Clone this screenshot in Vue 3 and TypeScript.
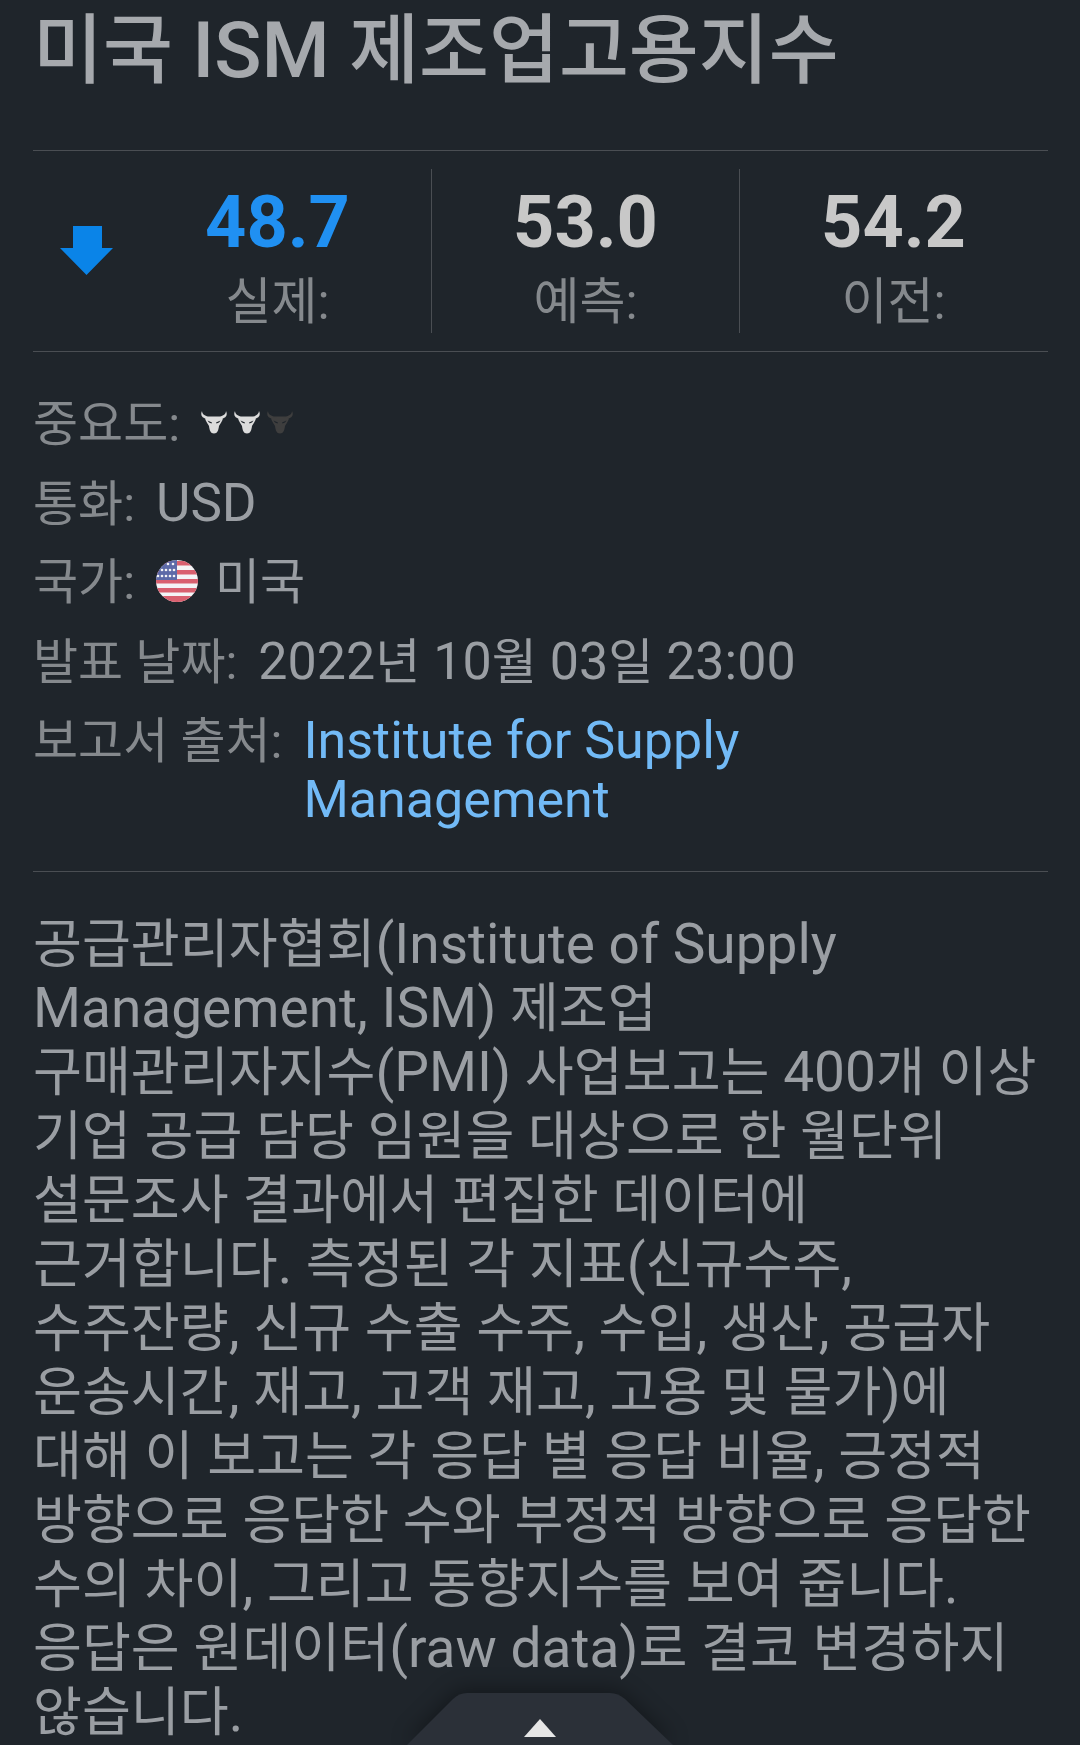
<template>
  <div class="page">
    <h1 class="title">
      <span v-for="(p, i) in split('미국 ISM 제조업고용지수')" :key="i" :class="{ lat: p.latin }">{{ p.text }}</span>
    </h1>
    <div class="stats">
      <div class="arrow-cell">
        <svg width="53" height="49" viewBox="0 0 53 49">
          <path d="M13 0H42V22H53L26.500 49L0 22H13Z" fill="#0a84e8" />
        </svg>
      </div>
      <div v-for="s in stats" :key="s.label" class="stat">
        <div class="stat-value" :class="{ actual: s.actual }">{{ s.value }}</div>
        <div class="stat-label">{{ s.label }}</div>
      </div>
    </div>
    <div class="info">
      <div class="row">
        <span class="key">중요도:</span>
        <span class="bulls">
          <svg v-for="b in 3" :key="b" width="26" height="23" viewBox="0 0 26 23" :class="{ dim: b === 3 }">
            <path d="M1 0C-1 4 1 7 6 8H20C25 7 27 4 25 0C25 3 22 5 19 5.500H7C4 5 1 3 1 0Z" />
            <path d="M4 7.500C7 5.500 19 5.500 22 7.500C21 11 19 13 18 15C17.500 19 16.500 22.500 13 22.500C9.500 22.500 8.500 19 8 15C7 13 5 11 4 7.500Z" />
            <path class="eye" d="M6.500 9.500L11 11.500L10.500 12.500L8 11.500ZM19.500 9.500L15 11.500L15.500 12.500L18 11.500Z" />
          </svg>
        </span>
      </div>
      <div class="row">
        <span class="key">통화:</span>
        <span class="val lat">USD</span>
      </div>
      <div class="row">
        <span class="key">국가:</span>
        <svg class="flag" width="42" height="42" viewBox="0 0 42 42">
          <defs>
            <clipPath id="flag-clip"><circle cx="21" cy="21" r="21" /></clipPath>
          </defs>
          <g clip-path="url(#flag-clip)">
            <rect width="42" height="42" fill="#f4f4f6" />
            <rect v-for="y in flagStripes" :key="y" :y="y" width="42" height="4.500" fill="#d9606f" />
            <rect y="36" width="42" height="6" fill="#d9606f" />
            <rect width="21" height="20" fill="#5d6aa8" />
            <circle v-for="(d, i) in flagStars" :key="i" :cx="d[0]" :cy="d[1]" r="1.300" fill="#f4f4f6" />
          </g>
        </svg>
        <span class="val">미국</span>
      </div>
      <div class="row">
        <span class="key">발표 날짜:</span>
        <span class="val">
          <span v-for="(p, i) in split('2022년 10월 03일 23:00')" :key="i" :class="{ lat: p.latin }">{{ p.text }}</span>
        </span>
      </div>
      <div class="row source">
        <span class="key">보고서 출처:</span>
        <span class="link lat">Institute for Supply Management</span>
      </div>
    </div>
    <div class="desc">
      <div v-for="(line, n) in descLines" :key="n" class="desc-line">
        <span v-for="(p, i) in split(line)" :key="i" :class="{ lat: p.latin }">{{ p.text }}</span>
      </div>
    </div>
    <div class="tab">
      <svg class="tab-shape" width="266" height="52" viewBox="0 0 266 52">
        <path d="M0 52L46 6Q52 0 60 0H203Q211 0 218 6L266 52Z" fill="#2b3038" />
      </svg>
      <svg class="tab-arrow" width="32" height="18" viewBox="0 0 32 18"><path d="M16 0L32 18H0Z" fill="#e6e6e6" /></svg>
    </div>
  </div>
</template>

<script setup lang="ts">
const stats = [
  { value: '48.7', label: '실제:', actual: true },
  { value: '53.0', label: '예측:', actual: false },
  { value: '54.2', label: '이전:', actual: false },
]

const descLines = [
  '공급관리자협회(Institute of Supply',
  'Management, ISM) 제조업',
  '구매관리자지수(PMI) 사업보고는 400개 이상',
  '기업 공급 담당 임원을 대상으로 한 월단위',
  '설문조사 결과에서 편집한 데이터에',
  '근거합니다. 측정된 각 지표(신규수주,',
  '수주잔량, 신규 수출 수주, 수입, 생산, 공급자',
  '운송시간, 재고, 고객 재고, 고용 및 물가)에',
  '대해 이 보고는 각 응답 별 응답 비율, 긍정적',
  '방향으로 응답한 수와 부정적 방향으로 응답한',
  '수의 차이, 그리고 동향지수를 보여 줍니다.',
  '응답은 원데이터(raw data)로 결코 변경하지',
  '않습니다.',
]

const flagStripes = [1, 10, 19, 28]

const flagStars: number[][] = [
  [12, 4], [17, 4],
  [6, 10], [10, 10], [14, 10], [18, 10],
  [2, 16], [6, 16], [10, 16], [14, 16], [18, 16],
]

// Hangul and Latin runs take different sizes in the original font
function split(text: string) {
  return text
    .split(/([\uac00-\ud7a3]+)/)
    .filter(Boolean)
    .map((t) => ({ text: t, latin: !/[\uac00-\ud7a3]/.test(t) }))
}
</script>

<style>
html, body {
  margin: 0;
  background: #1f252b;
}
</style>

<style scoped>
.page {
  position: relative;
  width: 1080px;
  height: 1745px;
  overflow: hidden;
  box-sizing: border-box;
  padding: 0 32px 0 33px;
  background: #1f252b;
  color: #9a9ea3;
  font-family: Roboto, "Noto Sans CJK KR", sans-serif;
}
.title {
  margin: 0;
  height: 151px;
  box-sizing: border-box;
  padding-top: 7px;
  font-size: 76px;
  line-height: 88px;
  font-weight: 500;
  color: #a6a9ad;
  border-bottom: 1px solid #4a4e53;
  white-space: nowrap;
}
.title .lat {
  font-size: 78px;
}
.stats {
  display: flex;
  height: 201px;
  box-sizing: border-box;
  padding: 18px 0 18px;
  border-bottom: 1px solid #4a4e53;
}
.arrow-cell {
  width: 91px;
  flex: none;
  padding: 57px 0 0 27px;
  box-sizing: border-box;
}
.stat {
  width: 307px;
  flex: none;
  text-align: center;
  border-right: 1px solid #4a4e53;
}
.stat:last-child {
  border-right: none;
}
.stat-value {
  font-size: 72px;
  line-height: 80px;
  margin-top: 14px;
  font-weight: 700;
  color: #c8c8c8;
}
.stat-value.actual {
  color: #2090f2;
}
.stat-label {
  font-size: 50px;
  line-height: 64px;
  margin-top: 7px;
  color: #85898d;
}
.info {
  padding: 33px 0 42px;
  border-bottom: 1px solid #4a4e53;
}
.row {
  display: flex;
  align-items: baseline;
  gap: 21px;
  height: 79px;
  line-height: 79px;
  font-size: 49px;
}
.row .lat {
  font-size: 52px;
}
.row .val.lat {
  font-size: 53px;
}
.source {
  height: auto;
  line-height: 59px;
  padding-top: 10px;
}
.key {
  color: #85898d;
  white-space: nowrap;
}
.val {
  color: #9a9ea3;
  white-space: nowrap;
}
.bulls {
  display: flex;
  align-self: center;
  gap: 7px;
  margin-top: -5px;
  fill: #dcdcdc;
}
.bulls svg {
  display: block;
}
.bulls .dim {
  fill: #3e3e3e;
}
.bulls .eye {
  fill: #1f252b;
}
.flag {
  flex: none;
  align-self: center;
  margin-right: -4px;
  margin-top: -3px;
}
.link {
  color: #72baf6;
  width: 480px;
}
.desc {
  margin-top: 40px;
  font-size: 53.200px;
  line-height: 64px;
  color: #9a9ea3;
  white-space: nowrap;
}
.desc-line {
  height: 64px;
}
.desc .lat {
  font-size: 55px;
}
.tab {
  position: absolute;
  left: 407px;
  bottom: 0;
  width: 266px;
  height: 52px;
}
.tab-shape {
  display: block;
  filter: drop-shadow(0 -4px 10px rgba(0, 0, 0, 0.35));
}
.tab-arrow {
  position: absolute;
  left: 117px;
  bottom: 8px;
}
</style>
